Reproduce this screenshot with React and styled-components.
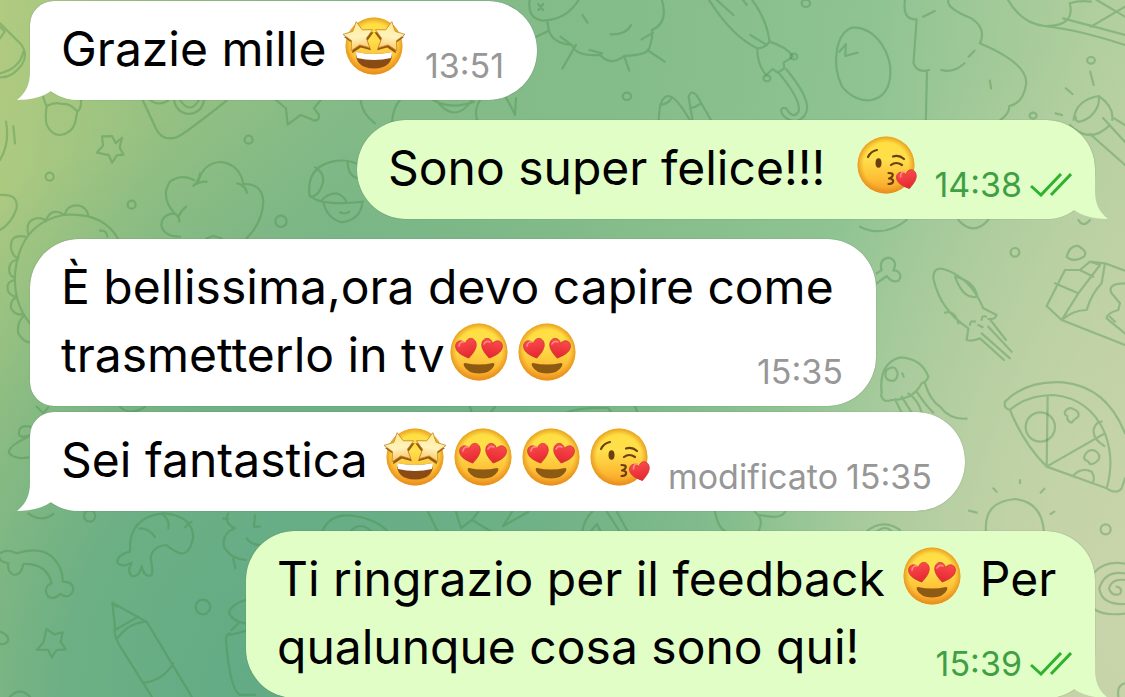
import React from 'react'
import styled, { createGlobalStyle } from 'styled-components'

const GlobalStyle = createGlobalStyle`
    * {
        box-sizing: border-box;
    }

    body {
        margin: 0;
        background: #84ba86;
        font-family: Inter, "Liberation Sans", sans-serif;
    }
`

const Page = styled.div`
    position: relative;
    height: 100vh;
    overflow: hidden;
    background:
        radial-gradient(ellipse 48% 85% at 25% 100%, #62ab85 0%, rgba(98, 171, 133, 0.8) 40%, rgba(98, 171, 133, 0) 100%),
        radial-gradient(ellipse 35% 80% at 100% 85%, #c9d4ab 0%, rgba(201, 212, 171, 0) 100%),
        linear-gradient(97deg, #b1cb80 0%, #96c182 14%, #83ba87 30%, #84bc8a 52%, #8fc392 72%, #b3cf9f 92%, #bfd1a3 100%);
`

const Wallpaper = styled.svg`
    position: absolute;
    top: 0;
    left: 0;
    width: 100%;
    height: 100%;
    fill: none;
    stroke: rgba(66, 138, 70, 0.36);
    stroke-width: 2.2;
    stroke-linecap: round;
    stroke-linejoin: round;

    * {
        vector-effect: non-scaling-stroke;
    }
`

const Chat = styled.main`
    position: relative;
    display: flex;
    flex-direction: column;
    padding: 1px 30px;
`

const Bubble = styled.article`
    position: relative;
    align-self: ${props => props.$out ? 'flex-end' : 'flex-start'};
    min-width: ${props => props.$min}px;
    margin-bottom: ${props => props.$joined ? 6 : 20}px;
    padding: 14px ${props => props.$out ? 23 : 33}px 17px 31px;
    border-radius: ${props => props.$corners};
    background: ${props => props.$out ? '#e1fec6' : '#fff'};
    box-shadow: 0 0 1px rgba(40, 80, 40, 0.6);
`

const Line = styled.div`
    display: flex;
    justify-content: space-between;
    align-items: flex-end;
    gap: 11px;
`

const Text = styled.p`
    margin: 0;
    color: #000;
    font-size: 48px;
    line-height: 68px;
    white-space: pre;
`

const Meta = styled.span`
    display: flex;
    align-items: center;
    gap: 8px;
    color: ${props => props.$out ? '#3f9f45' : '#979797'};
    font-size: 34px;
    line-height: 34px;
    white-space: nowrap;
`

const Checks = styled.svg`
    width: 42px;
    height: 24px;
    fill: none;
    stroke: #2fb32f;
    stroke-width: 3;
`

const Tail = styled.svg`
    position: absolute;
    bottom: 0;
    ${props => props.$out ? 'right: -14px; transform: scaleX(-1);' : 'left: -14px;'}
    width: 62px;
    height: 50px;
    fill: ${props => props.$out ? '#e1fec6' : '#fff'};
`

const EmojiSvg = styled.svg`
    width: 64px;
    height: 64px;
    margin: -8px 2px;
    vertical-align: -4px;
`

const Defs = styled.svg`
    position: absolute;
    width: 0;
    height: 0;
`

const HEART = 'M0 11 C-4 8 -12 3 -11 -4 C-10 -10 -3 -11 0 -5 C3 -11 10 -10 11 -4 C12 3 4 8 0 11Z'
const STAR = 'M0 -15 L4.8 -6 L15 -4.500 L7.500 3 L9.500 13 L0 8.500 L-9.500 13 L-7.500 3 L-15 -4.500 L-4.800 -6Z'

const Gradients = () => (
    <Defs aria-hidden="true">
        <linearGradient id="skin" x1="0" y1="0" x2="0" y2="1">
            <stop offset="0" stopColor="#ffdf3f" />
            <stop offset="0.4" stopColor="#ffdf4b" />
            <stop offset="0.75" stopColor="#fdbd35" />
            <stop offset="1" stopColor="#f49a26" />
        </linearGradient>
        <radialGradient id="rim">
            <stop offset="0.78" stopColor="#e99018" stopOpacity="0" />
            <stop offset="1" stopColor="#e08a18" stopOpacity="0.75" />
        </radialGradient>
        <linearGradient id="red" x1="0" y1="0" x2="0" y2="1">
            <stop offset="0" stopColor="#fb4a4c" />
            <stop offset="1" stopColor="#e3262f" />
        </linearGradient>
        <linearGradient id="gold" x1="0" y1="0" x2="0" y2="1">
            <stop offset="0" stopColor="#ffe98a" />
            <stop offset="0.55" stopColor="#fff3bd" />
            <stop offset="1" stopColor="#fbc765" />
        </linearGradient>
    </Defs>
)

const Face = () => (
    <>
        <circle cx="32" cy="32" r="28.5" fill="url(#skin)" />
        <circle cx="32" cy="32" r="28.5" fill="url(#rim)" />
    </>
)

const HeartEyes = () => (
    <EmojiSvg viewBox="0 0 64 64" role="img" aria-label="😍">
        <Face />
        <path d={HEART} transform="translate(19.5 28) rotate(-13) scale(.94)" fill="url(#red)" stroke="#cf3430" strokeWidth="0.8" />
        <path d={HEART} transform="translate(44.5 28) rotate(13) scale(.94)" fill="url(#red)" stroke="#cf3430" strokeWidth="0.8" />
        <path d="M12 26 Q13 21 17 22 M37 24 Q39 20 43 22" fill="none" stroke="#ff8d85" strokeWidth="1.6" strokeLinecap="round" />
        <path d="M18 43 Q32 46 46 43 Q48 43 47 46 Q43 53.500 32 53.500 Q21 53.500 17 46 Q16 43 18 43Z" fill="#8d5a14" />
    </EmojiSvg>
)

const Kiss = () => (
    <EmojiSvg viewBox="0 0 64 64" role="img" aria-label="😘">
        <Face />
        <ellipse cx="24.5" cy="30" rx="3" ry="4.8" fill="#6b3f10" />
        <g fill="none" stroke="#6b3f10" strokeWidth="2.2" strokeLinecap="round" strokeLinejoin="round">
            <path d="M14 24 Q17 18 23 17" />
            <path d="M39 23.500 Q45 21.500 50 26" />
            <path d="M37 32 Q42 28 48 32" />
            <path d="M34.500 40 Q40 40 38.500 43 Q37.500 45 35 45.500 Q40 46 39 49 Q38 51 34.500 51" />
        </g>
        <path d={HEART} transform="translate(53 46) rotate(-14) scale(.9)" fill="url(#red)" stroke="#cf3430" strokeWidth="0.8" />
        <path d="M46.500 44 Q46.500 39 50 39" fill="none" stroke="#ff8d85" strokeWidth="1.6" strokeLinecap="round" />
    </EmojiSvg>
)

const StarEyes = () => (
    <EmojiSvg viewBox="0 0 64 64" role="img" aria-label="🤩">
        <Face />
        <path d="M4 32 A28.500 28.500 0 0 0 60 32 Q54 54 32 55 Q10 54 4 32Z" fill="#ee8514" opacity="0.7" />
        <path d={STAR} transform="translate(17.500 25) rotate(-9)" fill="#94590f" />
        <path d={STAR} transform="translate(46.500 25) rotate(9)" fill="#94590f" />
        <path d={STAR} transform="translate(16.500 22.500) rotate(-9)" fill="url(#gold)" stroke="#c9862c" strokeWidth="0.8" strokeLinejoin="round" />
        <path d={STAR} transform="translate(47.500 22.500) rotate(9)" fill="url(#gold)" stroke="#c9862c" strokeWidth="0.8" strokeLinejoin="round" />
        <path d="M14 38 Q32 42 50 38 Q51 54 32 54.500 Q13 54 14 38Z" fill="#8a4a14" />
        <path d="M14 38 Q32 42 50 38 Q50 41 49 44 Q32 48 15 44 Q14 41 14 38Z" fill="#fff" />
    </EmojiSvg>
)

const TailShape = ({ out }) => (
    <Tail $out={out} viewBox="0 0 62 50" aria-hidden="true">
        <path d="M14 0 V22 C14 34 10 43 1 50 C14 50 27 47 35 41 C43 47 52 50 62 50Z" />
    </Tail>
)

const Time = ({ out, edited, children }) => (
    <Meta $out={out}>
        {edited && <span>modificato</span>}
        <time>{children}</time>
        {out && (
            <Checks viewBox="0 0 42 24" role="img" aria-label="Letto">
                <path d="M1 13 L11 22 L31 1 M21 22 L41 1" />
            </Checks>
        )}
    </Meta>
)

const Doodles = () => (
    <Wallpaper viewBox="0 0 1125 697" preserveAspectRatio="xMidYMid slice" aria-hidden="true">
        {/* top left: acorn, camera, stars, tree, mushroom */}
        <g transform="scale(.3333)">
            <path d="M0 70 L65 135 Q85 165 65 195 Q35 235 0 232 M0 80 L14 95 L0 115 M70 155 Q60 205 0 220" />
            <path d="M130 290 Q135 310 140 318 Q135 350 140 375 Q155 405 180 405 Q215 400 225 370 L232 335 Q245 325 243 300 M140 318 Q165 305 185 312 Q210 308 232 335" />
            <path d="M428 300 L470 390 Q490 425 530 412 Q550 405 680 302 M450 300 Q475 320 505 302 M522 300 Q530 340 568 342 Q605 338 613 300 M540 300 Q570 345 597 300" />
            <path d="M332 408 L345 428 L362 410 L358 440 L372 460 L352 464 L340 488 L328 466 L292 462 L308 440 L302 412Z" transform="rotate(6 332 450)" />
            <path d="M828 300 L858 325 L863 374 L902 345 L945 362 Q960 360 957 345 L942 325 L962 300" />
            <path d="M1082 300 Q1085 340 1125 370" />
            <path d="M18 365 Q30 430 0 480 M40 378 L45 430" />
            <circle cx="149" cy="530" r="12" /><circle cx="395" cy="614" r="12" />
            <circle cx="746" cy="419" r="12" /><circle cx="843" cy="664" r="17" />
            <path d="M0 585 Q55 580 50 625 Q35 670 0 690" />
            <path d="M595 545 Q610 487 665 486 Q720 495 730 552 Q790 550 790 610 Q785 670 740 715 M620 545 Q595 545 580 558 Q598 540 600 520 M712 550 Q735 555 741 578 M582 540 Q545 520 510 545 Q480 590 523 640 Q540 650 538 665 M558 620 Q545 630 535 650 M523 640 Q480 645 485 680 Q495 710 540 710 M620 715 L640 708 L665 715" />
            <path d="M928 585 Q920 500 1000 484 Q1050 475 1085 500 M928 585 Q960 620 1090 605 M945 502 Q985 525 960 570 Q950 590 930 590 M1043 488 Q1045 530 1075 535 M970 605 Q980 655 1025 667 Q1080 660 1087 610 M962 605 Q980 580 1010 580 Q1035 590 1040 608 M1020 637 Q1035 645 1048 635" />
        </g>

        {/* big dinosaur frill down the left edge */}
        <g transform="translate(0 180) scale(.3333)">
            <path d="M90 430 Q40 370 45 280 Q60 130 190 105 Q310 95 355 178 M85 165 Q75 120 110 115 Q130 112 137 125 M137 122 Q155 80 192 104 M195 103 Q200 75 235 76 Q262 82 265 107 M300 152 Q320 150 322 170 M75 170 Q30 160 33 205 Q38 230 55 235 M48 240 Q25 245 28 275 Q30 290 45 292 M45 300 Q15 305 25 335 Q35 350 50 350 M50 352 Q30 360 33 385 Q45 405 65 403 M70 408 Q50 430 55 460 Q70 485 88 487" />
            <path d="M110 680 L130 700 L145 682 M90 765 Q50 780 58 750 Q65 735 90 740 M85 770 Q20 800 28 820 Q45 840 85 832 M85 1000 Q125 1030 160 1002" />
        </g>

        {/* sheep, umbrella, egg, tree */}
        <g transform="translate(520 0) scale(.3858 .3333)">
            <path d="M25 0 Q18 55 60 62 Q120 60 152 0 M42 110 L75 92 L70 60 M75 92 Q85 130 135 135 Q145 170 208 165 Q235 200 270 168 Q330 165 335 145 Q345 110 342 90 Q385 70 368 0 M110 205 L145 135 M270 168 L283 212 M330 150 L375 185 M162 45 L175 68 M235 103 Q275 105 288 75 M105 110 L130 132 M180 150 L213 160 M315 118 L345 98 M47 12 L60 30 M60 12 L48 30" />
            <path d="M490 0 Q550 110 615 145 Q635 145 647 125 Q640 60 602 0 M510 0 L553 45 M578 0 L588 15 M597 105 L640 135 M615 145 Q615 195 638 225 L655 207 L668 218 L685 205 L683 188 L708 170 Q690 140 647 125 M668 215 Q730 300 722 335 Q708 360 690 325 Q675 320 677 335 Q685 360 715 365 Q750 350 743 310 Q735 270 690 208" />
            <circle cx="710" cy="170" r="9" /><circle cx="640" cy="235" r="9" />
            <circle cx="741" cy="10" r="11" /><circle cx="277" cy="289" r="11" />
            <path d="M865 82 C930 85 962 170 960 220 C957 320 875 320 835 260 C805 190 820 90 865 82 M828 155 L845 132 L843 168 L875 158" />
            <path d="M360 360 Q360 290 385 288 Q405 290 440 360 M363 315 Q385 312 392 295 M447 360 L437 290 Q445 265 460 290 L495 360 M440 325 Q455 322 467 312" />
            <path d="M998 0 Q990 60 1028 58 M1045 50 L1075 33 M1110 0 Q1105 25 1170 55 Q1210 85 1192 130 Q1315 190 1312 250 Q1305 310 1268 318 Q1270 340 1245 360 M1028 58 L1020 190 Q1030 220 1060 210 M1092 210 Q1125 220 1152 190 M1163 170 L1178 152 M1055 212 L1052 360 M1218 242 L1221 265" />
            <path d="M1265 0 Q1300 70 1360 78 Q1450 90 1568 135 M1360 78 Q1440 80 1425 10 Q1450 0 1480 5 M1408 55 L1568 105 M1495 0 L1568 50 M1480 80 L1568 20" />
            <path d="M1478 215 L1487 255 M1415 265 L1432 282 M1388 340 L1405 345 M1435 360 Q1440 300 1500 288 Q1540 320 1535 360 M1440 350 Q1440 380 1478 350 Q1505 320 1500 290 M1540 355 L1568 375" />
            <circle cx="1480" cy="181" r="10" /><circle cx="1330" cy="347" r="9" />
        </g>

        {/* behind the first reply */}
        <path d="M400 100 Q393 108 392 122 M436 100 Q455 125 472 100 M433 100 Q450 110 474 102 M480 100 Q473 112 478 122 M505 96 Q512 108 515 115 L516 98" />
        <path d="M1070 125 Q1090 145 1110 125 M1090 134 L1125 165 M1103 118 L1125 142" />

        {/* bone, squid, jellyfish, sweets, pizza */}
        <g transform="translate(860 220) scale(.3333)">
            <path d="M0 20 Q70 55 140 0 M295 0 Q340 50 385 0 M655 0 Q670 25 690 0" />
            <path d="M50 190 L80 168 Q95 190 115 182 Q130 165 110 152 Q105 150 100 152 Q115 120 85 113 Q55 120 65 150 L50 160" />
            <circle cx="465" cy="97" r="13" />
            <path d="M325 325 Q240 270 220 175 Q220 140 250 147 Q330 170 370 265 M325 325 L320 360 Q340 365 360 355 M370 265 L410 285 Q405 300 385 297 M285 170 Q345 185 352 230 Q310 240 285 170 M255 278 Q285 270 295 310 M330 315 Q330 300 345 305 M365 300 Q365 285 378 290 M355 315 L368 322 M360 355 L432 420 M365 340 L450 415 M385 320 L455 395 M390 298 L438 360" />
            <path d="M65 520 Q55 430 120 412 Q185 415 205 470 Q200 485 185 490 Q160 540 95 540 Q70 550 63 525 M80 450 Q105 430 113 460 Q110 490 85 480 Q70 470 80 450 M127 460 L131 470 M105 538 L125 578 M125 530 L155 578 M145 520 Q175 540 185 578 M170 515 Q200 560 220 578 M195 490 Q210 540 240 560 Q270 600 320 596" />
            <path d="M620 110 Q630 75 655 78 Q685 95 672 110 Q640 130 620 110" />
            <path d="M615 150 L560 258 L605 300 L795 375 M615 150 L660 150 L690 125 L735 130 L795 152 M585 190 L655 220 M660 150 L700 170 M690 125 L720 135 L655 220 L605 300 Q640 270 680 270 Q695 220 725 190 L735 130 M795 190 Q740 190 755 220 L780 250 L775 270 Q740 280 740 295 L795 340 M750 290 L765 305" />
            <path d="M435 545 Q500 480 610 487 Q740 500 795 640 M435 545 Q430 565 450 570 Q500 525 580 525 Q690 535 735 640 Q765 720 740 805 Q770 825 785 805 L795 775 M450 570 Q490 670 560 740 L740 805 M563 527 L560 740 L735 640 M733 678 Q695 655 702 625 Q710 605 725 605 M638 768 Q665 740 695 755 Q705 770 700 785" />
            <circle cx="541" cy="621" r="44" />
            <path d="M615 575 Q625 560 640 567 Q660 575 655 590 Q640 600 635 608 Q620 605 622 588 Q612 585 615 575 M675 705 Q685 685 705 692 Q725 705 715 720 Q700 735 690 732 Q685 722 675 720 Q670 712 675 705" />
        </g>

        {/* sun, swirl */}
        <g transform="translate(960 480) scale(.3333)">
            <path d="M78 155 Q70 65 165 57 Q245 65 252 155 M100 25 L110 35 M180 0 L180 10 M242 38 L253 26 M27 92 L50 98 M272 102 L283 95" />
            <circle cx="437" cy="148" r="15" />
            <path d="M405 275 Q440 240 500 252 M400 385 Q430 410 500 400 M495 280 Q435 270 418 325 Q425 375 495 372 M495 300 Q455 295 447 325 Q455 350 480 342 Q490 325 470 320 M495 610 Q470 615 475 650" />
        </g>

        {/* bottom left: macaroni, prawn, star, pencil */}
        <g transform="translate(0 400) scale(.3333)">
            <circle cx="269" cy="348" r="17" /><circle cx="609" cy="621" r="22" />
            <path d="M0 460 Q20 445 50 460 Q130 435 165 480 Q190 510 188 545 Q220 545 220 570 Q210 600 180 582 Q165 600 145 590 Q130 570 145 555 L155 550 Q140 490 70 492 Q65 525 42 525 Q20 515 25 490 Q0 485 0 475" />
            <path d="M390 455 Q385 350 490 340 Q575 345 580 410 Q570 465 540 460 Q515 450 500 435 Q455 440 452 475 Q460 515 455 525 Q435 535 425 500 Q415 535 395 527 Q380 515 395 488 Q365 505 352 488 Q350 465 390 455 M418 385 Q450 385 465 412 M485 342 Q510 355 505 385 M575 365 L555 382 M425 498 L432 520" />
            <path d="M685 340 Q670 370 705 385 Q665 400 672 440 Q690 475 737 480 M740 415 Q755 435 780 435 M765 345 L762 380 L780 380 M700 475 L706 505 M670 355 L685 358" />
            <path d="M140 687 L163 703 L188 697 L182 725 L197 748 L170 750 L155 772 L145 750 L110 750 L130 728Z" />
            <path d="M0 695 Q25 705 25 720 Q20 735 0 732 M30 890 Q60 860 90 890" />
            <path d="M337 608 L345 680 Q340 700 355 730 L455 890 M337 608 L420 655 L440 665 L575 890 M345 690 Q380 670 415 650 M352 715 Q385 670 435 665 M435 848 Q490 840 520 790 M337 608 L350 620" />
            <path d="M737 600 Q690 615 687 640 Q700 665 735 670 M690 700 Q680 700 678 720 Q690 870 720 885 L765 885 M690 705 L740 692 M695 690 L715 670" />
        </g>

        {/* strip above the last reply */}
        <path d="M322 532 Q330 512 355 516 Q378 520 388 532 M350 532 Q360 520 372 532 M428 512 L438 532 M456 512 L461 528 L472 520 L478 512 M472 520 L492 532 M503 526 L512 512 M503 526 L528 512 M582 532 Q585 518 592 512 M607 512 L620 532 M617 512 L628 532 M590 532 L597 524 L601 532 M715 512 Q718 528 726 532 M755 512 Q765 520 758 532 M760 515 Q780 520 785 512 M866 532 Q882 518 900 530 M876 532 Q886 524 892 532" />
        <path d="M470 407 L472 413 M495 407 L490 413 M565 413 Q580 407 608 408 L612 413 M635 407 L638 413 M120 407 Q130 416 145 407" />
    </Wallpaper>
)

const App = () => {

    return (
        <Page>
          <GlobalStyle />
          <Gradients />
          <Doodles />

          <Chat>
            <Bubble $min={507} $corners="24px 49px 49px 49px">
              <TailShape />
              <Line>
                <Text>Grazie mille <StarEyes /></Text>
                <Time>13:51</Time>
              </Line>
            </Bubble>

            <Bubble $out $min={738} $corners="49px">
              <TailShape out />
              <Line>
                <Text>Sono super felice!!!  <Kiss /></Text>
                <Time out>14:38</Time>
              </Line>
            </Bubble>

            <Bubble $joined $min={846} $corners="49px 49px 49px 24px">
              <Text>È bellissima,ora devo capire come</Text>
              <Line>
                <Text>trasmetterlo in tv<HeartEyes /><HeartEyes /></Text>
                <Time>15:35</Time>
              </Line>
            </Bubble>

            <Bubble $min={935} $corners="24px 49px 49px 49px">
              <TailShape />
              <Line>
                <Text>Sei fantastica <StarEyes /><HeartEyes /><HeartEyes /><Kiss /></Text>
                <Time edited>15:35</Time>
              </Line>
            </Bubble>

            <Bubble $out $min={849} $corners="49px">
              <TailShape out />
              <Text>Ti ringrazio per il feedback <HeartEyes /> Per</Text>
              <Line>
                <Text>qualunque cosa sono qui!</Text>
                <Time out>15:39</Time>
              </Line>
            </Bubble>
          </Chat>
        </Page>
    )
}

export default App
